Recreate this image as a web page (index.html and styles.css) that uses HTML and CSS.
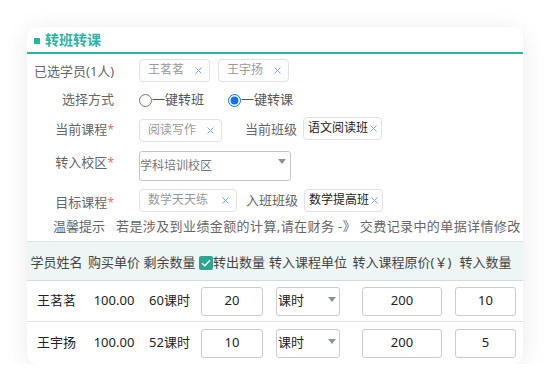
FILE: index.html
```html
<!DOCTYPE html>
<html lang="zh">
<head>
<meta charset="utf-8">
<title>转班转课</title>
<link rel="stylesheet" href="styles.css">
</head>
<body>
<div class="page">
  <div class="card">
    <div class="card-head"><span class="sq"></span><span class="title">转班转课</span></div>
    <div class="form">
      <div class="row r1">
        <span class="lbl">已选学员(1人)</span>
        <div class="ctrl">
          <span class="tag">王茗茗<svg class="x" width="7" height="7" viewBox="0 0 7 7"><path d="M0.5 0.5L6.5 6.5M6.5 0.5L0.5 6.5"/></svg></span>
          <span class="tag">王宇扬<svg class="x" width="7" height="7" viewBox="0 0 7 7"><path d="M0.5 0.5L6.5 6.5M6.5 0.5L0.5 6.5"/></svg></span>
        </div>
      </div>
      <div class="row r2">
        <span class="lbl">选择方式</span>
        <div class="ctrl radios">
          <label class="radio"><input type="radio" name="m">一键转班</label>
          <label class="radio"><input type="radio" name="m" checked>一键转课</label>
        </div>
      </div>
      <div class="row r3">
        <span class="lbl">当前课程<i class="req">*</i></span>
        <div class="ctrl">
          <span class="tag">阅读写作<svg class="x" width="7" height="7" viewBox="0 0 7 7"><path d="M0.5 0.5L6.5 6.5M6.5 0.5L0.5 6.5"/></svg></span>
          <span class="sublbl gap-a">当前班级</span>
          <span class="tag dark up">语文阅读班<svg class="x" width="7" height="7" viewBox="0 0 7 7"><path d="M0.5 0.5L6.5 6.5M6.5 0.5L0.5 6.5"/></svg></span>
        </div>
      </div>
      <div class="row r4">
        <span class="lbl lift">转入校区<i class="req">*</i></span>
        <div class="ctrl">
          <div class="campus"><span>学科培训校区</span><span class="arrow"></span></div>
        </div>
      </div>
      <div class="row r5">
        <span class="lbl drop">目标课程<i class="req">*</i></span>
        <div class="ctrl">
          <span class="tag wide">数学天天练<svg class="x" width="7" height="7" viewBox="0 0 7 7"><path d="M0.5 0.5L6.5 6.5M6.5 0.5L0.5 6.5"/></svg></span>
          <span class="sublbl gap-b">入班班级</span>
          <span class="tag dark">数学提高班<svg class="x" width="7" height="7" viewBox="0 0 7 7"><path d="M0.5 0.5L6.5 6.5M6.5 0.5L0.5 6.5"/></svg></span>
        </div>
      </div>
      <div class="row r6">
        <span class="tip-h">温馨提示</span><span class="tip">若是涉及到业绩金额的计算,请在财务 -》 交费记录中的单据详情修改</span>
      </div>
    </div>
    <table class="grid">
      <colgroup>
        <col class="c1"><col class="c2"><col class="c3"><col class="c4"><col class="c5"><col class="c6"><col class="c7">
      </colgroup>
      <thead>
        <tr>
          <th>学员姓名</th>
          <th>购买单价</th>
          <th>剩余数量</th>
          <th><span class="chk-wrap"><span class="chk"><svg width="10" height="8" viewBox="0 0 10 8"><path d="M1 4.2L3.8 6.8L9 1.2"/></svg></span>转出数量</span></th>
          <th>转入课程单位</th>
          <th>转入课程原价(￥)</th>
          <th class="last">转入数量</th>
        </tr>
      </thead>
      <tbody>
        <tr class="row-a">
          <td>王茗茗</td>
          <td>100.00</td>
          <td>60课时</td>
          <td><span class="box w62">20</span></td>
          <td><span class="sel"><span>课时</span><span class="arrow"></span></span></td>
          <td><span class="box w80">200</span></td>
          <td class="last"><span class="box w61">10</span></td>
        </tr>
        <tr class="row-b">
          <td>王宇扬</td>
          <td>100.00</td>
          <td>52课时</td>
          <td><span class="box w62">10</span></td>
          <td><span class="sel"><span>课时</span><span class="arrow"></span></span></td>
          <td><span class="box w80">200</span></td>
          <td class="last"><span class="box w61">5</span></td>
        </tr>
      </tbody>
    </table>
  </div>
</div>
</body>
</html>
```
FILE: styles.css
```css
html, body {
  margin: 0;
  padding: 0;
  background: #ffffff;
}
body {
  font-family: "Noto Sans", "Noto Sans CJK SC", sans-serif;
  font-size: 13px;
  line-height: 1.2;
  color: #333;
}
.page {
  padding: 27px 27px 0 27px;
}
.card {
  width: 496px;
  background: #fff;
  border-radius: 10px;
  box-shadow: 0 3px 26px rgba(0, 0, 0, 0.085);
  overflow: hidden;
}
.card-head {
  height: 25px;
  border-bottom: 2px solid #2db3a3;
  display: flex;
  align-items: center;
  padding-left: 7px;
}
.sq {
  width: 6px;
  height: 6px;
  background: #2db3a3;
  margin-right: 5px;
  margin-top: 3px;
}
.title {
  font-size: 14px;
  font-weight: bold;
  color: #2db3a3;
  margin-top: 1px;
}
.form {
  padding: 3px 0 0 7px;
}
.row {
  display: flex;
  align-items: center;
}
.r1 { height: 27px; }
.r2 { height: 32px; }
.r3 { height: 28px; }
.r4 { height: 44px; }
.r5 { height: 24px; }
.r6 { height: 29px; padding-top: 0; }
.lbl {
  width: 80px;
  text-align: right;
  color: #666;
  font-size: 13px;
  white-space: nowrap;
  flex: none;
}
.r1 .lbl { padding-top: 3px; }
.lift { margin-bottom: 7px; }
.drop { margin-top: 6px; }
.req {
  font-style: normal;
  color: #f56c6c;
  font-size: 12px;
}
.ctrl {
  display: flex;
  align-items: center;
  margin-left: 25px;
}
.tag {
  display: inline-flex;
  align-items: center;
  height: 23px;
  box-sizing: border-box;
  border: 1px solid #dfe1e6;
  border-radius: 4px;
  padding: 0 7px 0 8px;
  font-size: 12px;
  color: #999;
  background: #fff;
  margin-right: 8px;
}
.tag .x {
  margin-left: 11px;
  fill: none;
  stroke: #7ea6e6;
  stroke-width: 1;
}
.tag.wide .x { margin-left: 14px; }
.tag.dark {
  color: #222;
  padding: 0 4px 0 4px;
}
.tag.dark .x { margin-left: 2px; }
.tag.up { margin-top: -4px; }
.sublbl {
  color: #666;
  font-size: 13px;
  white-space: nowrap;
  margin-right: 6px;
}
.gap-a { margin-left: 15px; }
.gap-b { margin-left: 1px; margin-top: 2px; margin-right: 6px; }
.radios { margin-left: 25px; }
.radio {
  display: inline-flex;
  align-items: center;
  color: #555;
  font-size: 13px;
  margin-right: 24px;
}
.radio input {
  margin: 0;
  width: 13px;
  height: 13px;
}
.campus {
  width: 152px;
  height: 30px;
  box-sizing: border-box;
  border: 1px solid #bfc5d0;
  border-radius: 3px;
  display: flex;
  justify-content: space-between;
  align-items: flex-start;
  font-size: 12px;
  color: #777;
}
.campus span:first-child {
  margin-top: 7px;
  margin-left: 0;
}
.campus .arrow {
  margin-top: 7px;
  margin-right: 4px;
}
.arrow {
  width: 0;
  height: 0;
  border-left: 4.5px solid transparent;
  border-right: 4.5px solid transparent;
  border-top: 5px solid #8c929c;
}
.r6 {
  padding-left: 19px;
  color: #666;
  font-size: 13px;
  white-space: nowrap;
}
.tip-h { margin-right: 11px; }
.tip { letter-spacing: 0.4px; }
.grid {
  width: 496px;
  border-collapse: collapse;
  table-layout: fixed;
}
.c1 { width: 59px; }
.c2 { width: 56px; }
.c3 { width: 55px; }
.c4 { width: 70px; }
.c5 { width: 82px; }
.c6 { width: 106px; }
.c7 { width: 68px; }
.grid th {
  height: 39px;
  padding: 3px 0 0 0;
  box-sizing: border-box;
  background: #eef6f5;
  border-top: 1px solid #dde4e8;
  border-bottom: 1px solid #d3dbe1;
  font-weight: normal;
  font-size: 13px;
  color: #444;
  white-space: nowrap;
  text-align: center;
}
.grid th.last, .grid td.last { padding-right: 7px; }
.chk-wrap {
  display: inline-flex;
  align-items: center;
}
.chk {
  width: 14px;
  height: 14px;
  border-radius: 2px;
  background: #2ea68f;
  display: inline-flex;
  align-items: center;
  justify-content: center;
}
.chk svg {
  fill: none;
  stroke: #fff;
  stroke-width: 1.4;
}
.grid td {
  padding: 0;
  text-align: center;
  font-size: 13px;
  color: #222;
  white-space: nowrap;
}
.row-a td {
  height: 40px;
  border-bottom: 1px solid #dde3e8;
}
.row-b td {
  height: 42px;
}
.box {
  display: inline-flex;
  align-items: center;
  justify-content: center;
  height: 29px;
  box-sizing: border-box;
  border: 1px solid #c7ccd7;
  border-radius: 3px;
  vertical-align: middle;
  color: #222;
  font-size: 13px;
}
.w62 { width: 62px; }
.w80 { width: 80px; }
.w61 { width: 61px; }
.sel {
  display: inline-flex;
  align-items: center;
  justify-content: space-between;
  width: 64px;
  height: 29px;
  box-sizing: border-box;
  border: 1px solid #c7ccd7;
  border-radius: 3px;
  vertical-align: middle;
  padding: 0 3px 0 1px;
  font-size: 13px;
  color: #222;
}
.sel .arrow {
  margin-top: -4px;
}
```
